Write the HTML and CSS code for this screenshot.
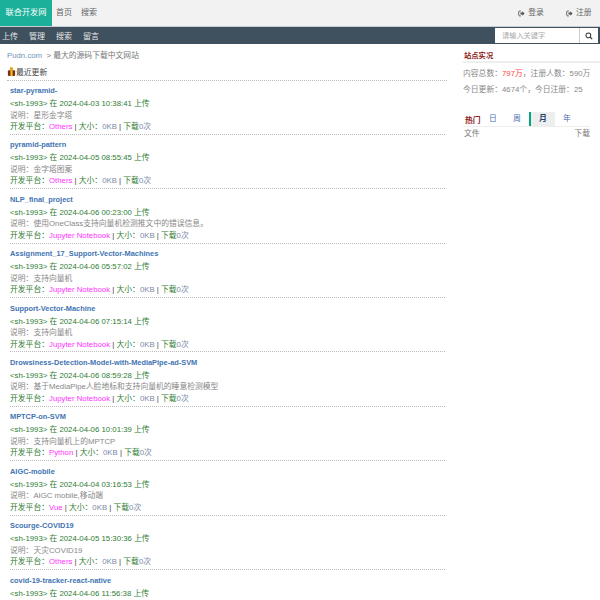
FILE: index.html
```html
<!DOCTYPE html>
<html lang="zh">
<head>
<meta charset="utf-8">
<title>Pudn</title>
<link rel="stylesheet" href="styles.css">
</head>
<body>
<header class="topbar">
  <div class="brand">联合开发网</div>
  <nav class="topnav"><a>首页</a><a>搜索</a></nav>
  <div class="account">
    <a><svg class="ico" viewBox="0 0 10 10"><path d="M4 1.500H2.500A1.500 1.500 0 0 0 1 3v4a1.500 1.500 0 0 0 1.500 1.500H4" fill="none" stroke="#555" stroke-width="1.300"/><path d="M3.500 3.700h2.500V1.700L9.500 5 6 8.300V6.300H3.500z" fill="#555"/></svg>登录</a>
    <a><svg class="ico" viewBox="0 0 10 10"><path d="M4 1.500H2.500A1.500 1.500 0 0 0 1 3v4a1.500 1.500 0 0 0 1.500 1.500H4" fill="none" stroke="#555" stroke-width="1.300"/><path d="M3.500 3.700h2.500V1.700L9.500 5 6 8.300V6.300H3.500z" fill="#555"/></svg>注册</a>
  </div>
</header>
<div class="subbar">
  <nav class="subnav"><a>上传</a><a>管理</a><a>搜索</a><a>留言</a></nav>
  <div class="search">
    <div class="search-input">请输入关键字</div>
    <div class="search-btn"><svg viewBox="0 0 10 10" width="8" height="8"><circle cx="4.200" cy="4.200" r="3" fill="none" stroke="#333" stroke-width="1.300"/><path d="M6.500 6.500L9 9" stroke="#333" stroke-width="1.500"/></svg></div>
  </div>
</div>
<div class="page">
  <main class="main">
    <div class="crumb"><span class="crumb-home">Pudn.com</span> &nbsp;&gt; 最大的源码下载中文网站</div>
    <h2 class="latest"><svg class="gift" viewBox="0 0 10 10"><rect x="1" y="3.500" width="8" height="6.500" rx="1.200" fill="#7a2e12"/><rect x="3.800" y="3.500" width="2.400" height="6.500" fill="#f0c028"/><circle cx="5" cy="2" r="1.900" fill="#e2a818"/></svg>最近更新</h2>
    <article class="item"><h3>star-pyramid-</h3><p class="meta">&lt;sh-1993&gt; 在 2024-04-03 10:38:41 上传</p><p class="desc">说明：星形金字塔</p><p class="info">开发平台：<b>Others</b> <u>|</u> 大小：<i>0KB</i> <u>|</u> 下载<i>0次</i></p></article>
    <article class="item"><h3>pyramid-pattern</h3><p class="meta">&lt;sh-1993&gt; 在 2024-04-05 08:55:45 上传</p><p class="desc">说明：金字塔图案</p><p class="info">开发平台：<b>Others</b> <u>|</u> 大小：<i>0KB</i> <u>|</u> 下载<i>0次</i></p></article>
    <article class="item"><h3>NLP_final_project</h3><p class="meta">&lt;sh-1993&gt; 在 2024-04-06 00:23:00 上传</p><p class="desc">说明：使用OneClass支持向量机检测推文中的错误信息。</p><p class="info">开发平台：<b>Jupyter Notebook</b> <u>|</u> 大小：<i>0KB</i> <u>|</u> 下载<i>0次</i></p></article>
    <article class="item"><h3>Assignment_17_Support-Vector-Machines</h3><p class="meta">&lt;sh-1993&gt; 在 2024-04-06 05:57:02 上传</p><p class="desc">说明：支持向量机</p><p class="info">开发平台：<b>Jupyter Notebook</b> <u>|</u> 大小：<i>0KB</i> <u>|</u> 下载<i>0次</i></p></article>
    <article class="item"><h3>Support-Vector-Machine</h3><p class="meta">&lt;sh-1993&gt; 在 2024-04-06 07:15:14 上传</p><p class="desc">说明：支持向量机</p><p class="info">开发平台：<b>Jupyter Notebook</b> <u>|</u> 大小：<i>0KB</i> <u>|</u> 下载<i>0次</i></p></article>
    <article class="item"><h3>Drowsiness-Detection-Model-with-MediaPipe-ad-SVM</h3><p class="meta">&lt;sh-1993&gt; 在 2024-04-06 08:59:28 上传</p><p class="desc">说明：基于MediaPipe人脸地标和支持向量机的睡意检测模型</p><p class="info">开发平台：<b>Jupyter Notebook</b> <u>|</u> 大小：<i>0KB</i> <u>|</u> 下载<i>0次</i></p></article>
    <article class="item"><h3>MPTCP-on-SVM</h3><p class="meta">&lt;sh-1993&gt; 在 2024-04-06 10:01:39 上传</p><p class="desc">说明：支持向量机上的MPTCP</p><p class="info">开发平台：<b>Python</b> <u>|</u> 大小：<i>0KB</i> <u>|</u> 下载<i>0次</i></p></article>
    <article class="item"><h3>AIGC-mobile</h3><p class="meta">&lt;sh-1993&gt; 在 2024-04-04 03:16:53 上传</p><p class="desc">说明：AIGC mobile,移动端</p><p class="info">开发平台：<b>Vue</b> <u>|</u> 大小：<i>0KB</i> <u>|</u> 下载<i>0次</i></p></article>
    <article class="item"><h3>Scourge-COVID19</h3><p class="meta">&lt;sh-1993&gt; 在 2024-04-05 15:30:36 上传</p><p class="desc">说明：天灾COVID19</p><p class="info">开发平台：<b>Others</b> <u>|</u> 大小：<i>0KB</i> <u>|</u> 下载<i>0次</i></p></article>
    <article class="item last"><h3>covid-19-tracker-react-native</h3><p class="meta">&lt;sh-1993&gt; 在 2024-04-06 11:56:38 上传</p></article>
  </main>
  <aside class="side">
    <h4 class="side-title">站点实况</h4>
    <p class="stat first">内容总数：<em>797万</em>，注册人数：590万</p>
    <p class="stat">今日更新：4674个，今日注册：25</p>
    <div class="tabs"><strong>热门</strong><a>日</a><a>周</a><a class="on">月</a><a>年</a></div>
    <div class="files"><span>文件</span><span>下载</span></div>
  </aside>
</div>
</body>
</html>
```
FILE: styles.css
```css
html, body { margin: 0; padding: 0; height: 600px; overflow: hidden; background: #fff; }
body { font-family: "Liberation Sans", "Noto Sans CJK SC", sans-serif; font-size: 7.800px; color: #666; }
p, h2, h3, h4 { margin: 0; font-weight: normal; }

.topbar { display: flex; height: 26px; background: #f2f2f2; border-bottom: 1px solid #c9ced2; }
.brand { width: 52px; background: #1ab09a; color: #fff; font-size: 8.200px; line-height: 26px; text-align: center; }
.topnav { display: flex; gap: 9px; padding-left: 4px; font-size: 8px; line-height: 26px; color: #666; }
.account { display: flex; gap: 22px; margin-left: auto; padding-right: 8.500px; line-height: 26px; color: #666; }
.account a { display: flex; align-items: center; gap: 3px; }
.ico { width: 7px; height: 7px; }

.subbar { display: flex; justify-content: space-between; align-items: center; height: 17px; background: #3f505f; }
.subnav { display: flex; gap: 11px; padding-left: 2px; color: #e6e6e6; font-size: 8px; }
.search { display: flex; height: 15px; margin-right: 2px; background: #fff; }
.search-input { width: 85px; padding-left: 7px; box-sizing: border-box; line-height: 15px; color: #aaa; font-size: 7.200px; border-right: 1px solid #ccc; }
.search-btn { width: 18px; display: flex; align-items: center; justify-content: center; }

.page { display: flex; }
.main { width: 445px; padding-top: 4px; flex: none; }
.crumb { padding-left: 7px; height: 15.500px; line-height: 16px; color: #777; }
.crumb-home { color: #6f94b8; }
.latest { display: flex; align-items: center; margin-left: 7px; width: 440px; height: 16px; box-sizing: content-box; color: #444; font-size: 7.800px; border-bottom: 1px dotted #bbb; }
.gift { width: 9px; height: 9px; flex: none; }

.item { box-sizing: border-box; height: 54.400px; margin-left: 10px; padding-top: 3.500px; border-bottom: 1px dotted #bbb; }
.item.last { border-bottom: 0; }
.item h3 { font-size: 7.400px; font-weight: bold; color: #3f74b2; line-height: 14px; }
.item p { line-height: 11.500px; }
.meta { color: #2e7d32; }
.desc { color: #888; }
.info { color: #2f7d32; }
.info b { color: #ff33ff; font-weight: normal; }
.info i { font-style: normal; color: #7a8aa8; }
.info u { text-decoration: none; color: #444; }

.side { width: 137px; margin-left: 18px; padding-top: 6px; }
.side-title { font-size: 7.300px; font-weight: bold; color: #8b1a1a; line-height: 11px; border-bottom: 2px solid #eee; padding-left: 1px; }
.stat { line-height: 16.500px; color: #888; white-space: nowrap; }
.stat.first { margin-top: 2.500px; }
.stat em { font-style: normal; color: #f44; }
.tabs { display: flex; align-items: center; margin-top: 13.500px; height: 14px; width: 127px; border-bottom: 1px solid #eee; }
.tabs strong { color: #8b1a1a; width: 18px; padding-left: 2px; box-sizing: border-box; white-space: nowrap; }
.tabs a { width: 24px; color: #4a6fb5; text-align: center; line-height: 14px; }
.tabs .on { background: #eee; color: #27406e; border-left: 2px solid #00a67e; width: 26px; box-sizing: border-box; font-weight: bold; }
.files { display: flex; justify-content: space-between; width: 127px; padding-left: 1px; line-height: 14px; color: #777; box-sizing: border-box; }
```
